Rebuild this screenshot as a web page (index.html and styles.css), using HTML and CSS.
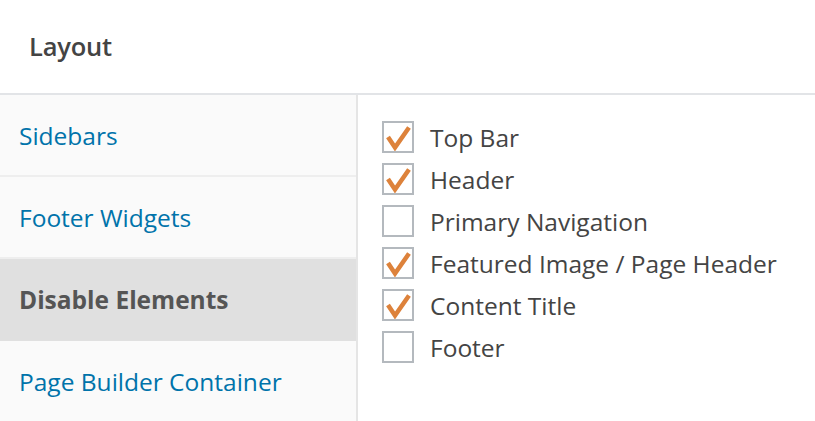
FILE: index.html
```html
<!DOCTYPE html>
<html>
<head>
<meta charset="utf-8">
<link rel="stylesheet" href="styles.css">
</head>
<body>
<div class="panel">
  <div class="panel-head">Layout</div>
  <div class="panel-body">
    <ul class="tabs">
      <li class="tab"><a>Sidebars</a></li>
      <li class="tab"><a>Footer Widgets</a></li>
      <li class="tab active"><a>Disable Elements</a></li>
      <li class="tab"><a>Page Builder Container</a></li>
    </ul>
    <div class="options">
      <label class="opt"><span class="box checked"><svg viewBox="0 0 28 28"><path d="M4 14 L11 24.5 L25 4.5" /></svg></span>Top Bar</label>
      <label class="opt"><span class="box checked"><svg viewBox="0 0 28 28"><path d="M4 14 L11 24.5 L25 4.5" /></svg></span>Header</label>
      <label class="opt"><span class="box"></span>Primary Navigation</label>
      <label class="opt"><span class="box checked"><svg viewBox="0 0 28 28"><path d="M4 14 L11 24.5 L25 4.5" /></svg></span>Featured Image / Page Header</label>
      <label class="opt"><span class="box checked"><svg viewBox="0 0 28 28"><path d="M4 14 L11 24.5 L25 4.5" /></svg></span>Content Title</label>
      <label class="opt"><span class="box"></span>Footer</label>
    </div>
  </div>
</div>
</body>
</html>
```
FILE: styles.css
```css
html, body {
  margin: 0;
  padding: 0;
  background: #fff;
}
body {
  font-family: "Open Sans", "Noto Sans", sans-serif;
  color: #444;
  width: 815px;
  height: 421px;
  overflow: hidden;
}
.panel-head {
  height: 95px;
  box-sizing: border-box;
  padding: 0 29px 2px;
  display: flex;
  align-items: center;
  font-size: 25.5px;
  font-weight: 600;
  color: #444;
  border-bottom: 2px solid #e2e4e7;
  letter-spacing: -0.2px;
}
.panel-body {
  display: flex;
  height: 326px;
  overflow: hidden;
}
.tabs {
  list-style: none;
  margin: 0;
  padding: 0;
  width: 356px;
  background: #fafafa;
  border-right: 2px solid #e5e5e5;
  flex: none;
}
.tab {
  height: 80px;
  border-bottom: 2px solid #eeeeee;
  display: flex;
  align-items: center;
  padding: 0 19px;
  font-size: 24.5px;
  color: #0073aa;
}
.tab.active {
  background: #e0e0e0;
  color: #555;
  font-weight: 700;
  border-bottom-color: #e0e0e0;
}
.options {
  padding: 26px 0 0 24px;
  display: flex;
  flex-direction: column;
  gap: 10px;
}
.opt {
  display: flex;
  align-items: center;
  height: 32px;
  font-size: 24.5px;
  color: #444;
}
.box {
  width: 32px;
  height: 32px;
  box-sizing: border-box;
  border: 2px solid #b4b9be;
  background: #fff;
  margin-right: 16px;
  flex: none;
  display: flex;
}
.box svg {
  width: 28px;
  height: 28px;
}
.box svg path {
  fill: none;
  stroke: #dd823b;
  stroke-width: 4.5;
}
```
